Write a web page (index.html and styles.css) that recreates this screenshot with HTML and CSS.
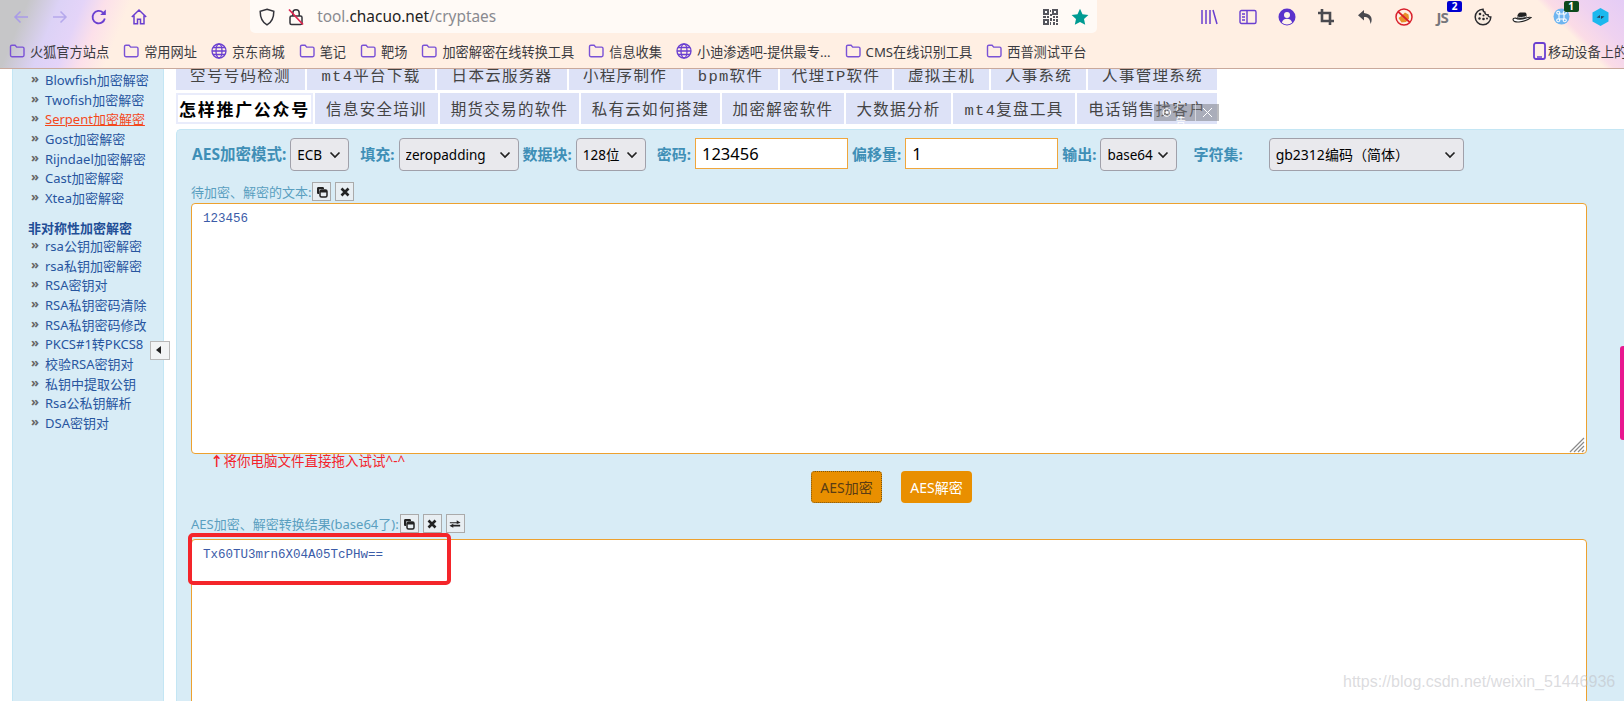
FILE: index.html
```html
<!DOCTYPE html>
<html lang="en">
<head>
    <meta charset="UTF-8">
    <title>AES加密解密</title>
    <link rel="stylesheet" href="styles.css">
</head>
<body>
    <!-- Icon sprites -->
    <svg class="sprites" width="0" height="0">
        <symbol id="i-folder" viewBox="0 0 16 16"><path d="M1.5 3.6c0-.8.6-1.4 1.4-1.4h3.2l1.6 1.9h5.9c.8 0 1.4.6 1.4 1.4v6.8c0 .8-.6 1.4-1.4 1.4H2.9c-.8 0-1.4-.6-1.4-1.4z" fill="none" stroke="#7a52d6" stroke-width="1.4"/></symbol>
        <symbol id="i-globe" viewBox="0 0 16 16"><g fill="none" stroke="#6a3fd0" stroke-width="1.3"><circle cx="8" cy="8" r="7"/><ellipse cx="8" cy="8" rx="3" ry="7"/><path d="M1 8h14M2 4.5h12M2 11.5h12"/></g></symbol>
        <symbol id="i-copy" viewBox="0 0 12 12"><path d="M1 2.5C1 1.5 1.600 1 2.500 1h4C7.500 1 8 1.500 8 2.500V3H4.500C3.500 3 3 3.600 3 4.500V8h-.5C1.500 8 1 7.500 1 6.500z" fill="#222"/><rect x="4" y="4" width="7" height="7" rx="1.500" fill="none" stroke="#222" stroke-width="1.500"/><rect x="4" y="4" width="7" height="2.500" fill="#222"/></symbol>
        <symbol id="i-close" viewBox="0 0 12 12"><path d="M2.500 2.500l7 7M9.500 2.500l-7 7" stroke="#222" stroke-width="2.600" fill="none"/></symbol>
        <symbol id="i-swap" viewBox="0 0 14 12"><path d="M1 4h8V1.500L13.500 4.500 9 6V5H1zM13 7H5V5.800L.5 8 5 10.500V9h8z" fill="#222"/></symbol>
    </svg>

    <!-- Browser chrome -->
    <div class="browser">
        <div class="toolbar">
            <div class="nav-btn">
                <svg width="18" height="18" viewBox="0 0 18 18"><path d="M16 9H3M8.500 3.500L3 9l5.500 5.500" fill="none" stroke="#a99be8" stroke-width="1.500"/></svg>
            </div>
            <div class="nav-btn">
                <svg width="18" height="18" viewBox="0 0 18 18"><path d="M2 9h13M9.500 3.500L15 9l-5.500 5.500" fill="none" stroke="#b5a8ec" stroke-width="1.500"/></svg>
            </div>
            <div class="nav-btn">
                <svg width="18" height="18" viewBox="0 0 18 18"><path d="M14.800 10.500A6.200 6.200 0 1 1 13 4.600" fill="none" stroke="#6a3fd0" stroke-width="1.800"/><path d="M15.800 1.500v5.600h-5.600z" fill="#6a3fd0"/></svg>
            </div>
            <div class="nav-btn">
                <svg width="18" height="18" viewBox="0 0 18 18"><path d="M1.800 9L9 2l7.200 7M4 7.500v8.300h3.500v-4.500h3v4.500H14V7.500" fill="none" stroke="#6a3fd0" stroke-width="1.500"/></svg>
            </div>
            <div class="urlbar">
                <svg class="url-shield" width="16" height="18" viewBox="0 0 16 18"><path d="M8 1.200L14.800 3.400c0 6-1.500 10.500-6.800 13.400C2.700 13.900 1.200 9.400 1.200 3.400z" fill="none" stroke="#33333a" stroke-width="1.500"/></svg>
                <svg class="url-lock" width="16" height="18" viewBox="0 0 16 18"><rect x="2" y="8" width="12" height="8.500" rx="1.500" fill="none" stroke="#33333a" stroke-width="1.500"/><path d="M4.800 8V5a3.200 3.200 0 0 1 6.400 0v3" fill="none" stroke="#33333a" stroke-width="1.500"/><path d="M1 1.500l14 15" stroke="#e0234f" stroke-width="1.700"/></svg>
                <span class="url-text">tool.<b>chacuo.net</b>/cryptaes</span>
                <svg class="url-qr" width="15" height="16" viewBox="0 0 15 16"><g fill="#55555c"><path d="M0 0h6v6H0zM9 0h6v6H9zM0 10h6v6H0z"/><path d="M7 1h1v2H7zM7 5h2v2H7zM10 7h2v2h-2zM13 7h2v2h-2zM0 7h3v2H0zM4 7h2v2H4zM7 9h2v3H7zM10 10h2v2h-2zM13 10h2v3h-2zM7 13h1v3H7zM10 13h2v3h-2zM13 14h2v2h-2z"/></g><path d="M2 2h2v2H2zM11 2h2v2h-2zM2 12h2v2H2z" fill="#fff"/></svg>
                <svg class="url-star" width="18" height="18" viewBox="0 0 18 18"><path d="M9 .8l2.500 5.400 5.900.7-4.400 4 1.200 5.900L9 13.900l-5.200 2.900L5 10.900.6 6.900l5.900-.7z" fill="#009b92"/></svg>
            </div>
            <div class="tool-icons">
                <div class="tool-icon"><svg width="18" height="16" viewBox="0 0 18 16"><path d="M2 1v14M6 1v14M10 1v14M13 1l4 14" fill="none" stroke="#6a3fd0" stroke-width="1.500"/></svg></div>
                <div class="tool-icon"><svg width="18" height="16" viewBox="0 0 18 16"><rect x="1" y="1.500" width="16" height="13" rx="1.500" fill="none" stroke="#6a3fd0" stroke-width="1.400"/><path d="M8 1.500v13M3 5h3M3 8h3M3 11h3" fill="none" stroke="#6a3fd0" stroke-width="1.400"/></svg></div>
                <div class="tool-icon"><svg width="18" height="18" viewBox="0 0 18 18"><circle cx="9" cy="9" r="8.500" fill="#5a32cc"/><circle cx="9" cy="7" r="3" fill="#fff4ea"/><path d="M3.800 14.500c1-3 3-3.800 5.200-3.800s4.200.8 5.200 3.800A8 8 0 0 1 9 16.500a8 8 0 0 1-5.200-2z" fill="#fff4ea"/></svg></div>
                <div class="tool-icon"><svg width="16" height="16" viewBox="0 0 16 16"><path d="M4 0v12h12M0 4h12v12" fill="none" stroke="#4a4a50" stroke-width="2.600"/></svg></div>
                <div class="tool-icon"><svg width="17" height="16" viewBox="0 0 17 16"><path d="M7 1L1 6.200 7 11.500V8c4 0 6.200 1.600 6.500 7 1.800-3 2.800-9.800-6.500-11z" fill="#4a4a50"/></svg></div>
                <div class="tool-icon"><svg width="18" height="18" viewBox="0 0 18 18"><circle cx="9" cy="9" r="8" fill="none" stroke="#d9202c" stroke-width="1.500"/><path d="M3.500 10l4.500-3.500 2-2 3.500 2 .5 4-3 3.500-4.500.5z" fill="#e8902a"/><path d="M3 3.500l12 11" stroke="#d9202c" stroke-width="1.700"/></svg></div>
                <div class="tool-icon"><span class="js-mark">JS</span><span class="badge badge-blue">2</span></div>
                <div class="tool-icon"><svg width="18" height="18" viewBox="0 0 18 18"><path d="M9 1.200a7.800 7.800 0 1 0 7.800 7.800c-1.700.2-2.800-.8-2.800-2.200-1.800.2-3.200-.9-3.100-2.600C9.700 4 9 2.800 9 1.200z" fill="#f8ece0" stroke="#2a2a2e" stroke-width="1.500"/><g fill="#2a2a2e"><circle cx="6" cy="6" r="1.300"/><circle cx="9.500" cy="7.500" r="1"/><circle cx="5.500" cy="10.500" r="1.200"/><circle cx="9.500" cy="11" r="1.300"/><circle cx="13" cy="10.500" r="1"/></g></svg></div>
                <div class="tool-icon"><svg width="20" height="12" viewBox="0 0 20 12"><path d="M1 8.500c0 2 3 2.800 6 2.500 4-.4 9-2 12-4.500-2-.5-3.300 0-4 .3C10 8.500 6 8.800 3.500 7 2 7 1 7.500 1 8.500z" fill="#fff" stroke="#222" stroke-width="1.100"/><path d="M5 7.200C5.300 3.500 6.500 1 9.500 1.500c1.500.2 3.500-.6 4.500.5.600 1 .8 2.500.8 4.300C11 8 8 8.500 5 7.200z" fill="#222"/><path d="M5 5.800c3 1.200 6.500.8 9.800-.8" stroke="#f4f4f4" stroke-width=".8" fill="none"/></svg></div>
                <div class="tool-icon"><svg width="17" height="17" viewBox="0 0 17 17"><circle cx="8.500" cy="8.500" r="8" fill="#6fb5f0"/><path d="M6 6h5v5H6zM6 6a1.500 1.500 0 1 0-1.500 0H6zM11 6a1.500 1.500 0 1 1 1.500 0H11zM6 11a1.500 1.500 0 1 1-1.500 0H6zM11 11a1.500 1.500 0 1 0 1.500 0H11z" fill="none" stroke="#fff" stroke-width="1.100"/></svg><span class="badge badge-green">1</span></div>
                <div class="tool-icon"><svg width="17" height="18" viewBox="0 0 17 18"><path d="M8.500 0l8 4.500v9l-8 4.500-8-4.500v-9z" fill="#1cb8ee"/><path d="M4.500 9.500l3.500-2.500v3zM12.500 8.500L9 11V8z" fill="#2a4560"/></svg></div>
            </div>
        </div>

        <div class="bookmarks">
            <div class="bookmark"><svg><use href="#i-folder"/></svg>火狐官方站点</div>
            <div class="bookmark"><svg><use href="#i-folder"/></svg>常用网址</div>
            <div class="bookmark"><svg><use href="#i-globe"/></svg>京东商城</div>
            <div class="bookmark"><svg><use href="#i-folder"/></svg>笔记</div>
            <div class="bookmark"><svg><use href="#i-folder"/></svg>靶场</div>
            <div class="bookmark"><svg><use href="#i-folder"/></svg>加密解密在线转换工具</div>
            <div class="bookmark"><svg><use href="#i-folder"/></svg>信息收集</div>
            <div class="bookmark"><svg><use href="#i-globe"/></svg>小迪渗透吧-提供最专...</div>
            <div class="bookmark"><svg><use href="#i-folder"/></svg>CMS在线识别工具</div>
            <div class="bookmark"><svg><use href="#i-folder"/></svg>西普测试平台</div>
            <div class="bookmark bookmark-mobile">
                <svg width="13" height="18" viewBox="0 0 13 18"><rect x="1" y="1" width="11" height="16" rx="2" fill="none" stroke="#6a3fd0" stroke-width="1.800"/><path d="M4 15h5" stroke="#6a3fd0" stroke-width="1.500"/></svg>移动设备上的
            </div>
        </div>
    </div>

    <!-- Page -->
    <div class="page">
        <!-- Sidebar -->
        <div class="sidebar">
            <ul class="side-list">
                <li><a href="#">Blowfish加密解密</a></li>
                <li><a href="#">Twofish加密解密</a></li>
                <li><a href="#" class="current">Serpent加密解密</a></li>
                <li><a href="#">Gost加密解密</a></li>
                <li><a href="#">Rijndael加密解密</a></li>
                <li><a href="#">Cast加密解密</a></li>
                <li><a href="#">Xtea加密解密</a></li>
            </ul>
            <h3>非对称性加密解密</h3>
            <ul class="side-list">
                <li><a href="#">rsa公钥加密解密</a></li>
                <li><a href="#">rsa私钥加密解密</a></li>
                <li><a href="#">RSA密钥对</a></li>
                <li><a href="#">RSA私钥密码清除</a></li>
                <li><a href="#">RSA私钥密码修改</a></li>
                <li><a href="#">PKCS#1转PKCS8</a></li>
                <li><a href="#">校验RSA密钥对</a></li>
                <li><a href="#">私钥中提取公钥</a></li>
                <li><a href="#">Rsa公私钥解析</a></li>
                <li><a href="#">DSA密钥对</a></li>
            </ul>
            <div class="side-toggle"></div>
        </div>

        <!-- Main Content -->
        <div class="main">
            <div class="ads">
                <div class="ad-row">
                    <a class="ad w131">空号号码检测</a>
                    <a class="ad w130">mt4平台下载</a>
                    <a class="ad w132">日本云服务器</a>
                    <a class="ad w114">小程序制作</a>
                    <a class="ad w97">bpm软件</a>
                    <a class="ad w114">代理IP软件</a>
                    <a class="ad w97">虚拟主机</a>
                    <a class="ad w97">人事系统</a>
                    <a class="ad w131">人事管理系统</a>
                </div>
                <div class="ad-row">
                    <a class="ad ad-hot w139">怎样推广公众号</a>
                    <a class="ad w125">信息安全培训</a>
                    <a class="ad w141">期货交易的软件</a>
                    <a class="ad w141">私有云如何搭建</a>
                    <a class="ad w124">加密解密软件</a>
                    <a class="ad w107">大数据分析</a>
                    <a class="ad w124">mt4复盘工具</a>
                    <a class="ad w140">电话销售找客户</a>
                </div>
                <div class="ad-tag">
                    <svg width="13" height="13" viewBox="0 0 13 13"><circle cx="6.500" cy="6.500" r="5" fill="none" stroke="#fff" stroke-width="1.500"/><circle cx="6.500" cy="6.500" r="2" fill="#fff"/></svg>
                    <span class="ad-tag-text">广告</span>
                    <span class="ad-tag-close">
                        <svg width="11" height="11" viewBox="0 0 11 11"><path d="M1 1l9 9M10 1l-9 9" stroke="#fff" stroke-width="1"/></svg>
                    </span>
                </div>
            </div>

            <div class="panel">
                <div class="options">
                    <label class="opt-label first">AES加密模式:</label>
                    <select class="w-mode"><option>ECB</option></select>
                    <label class="opt-label ml-8">填充:</label>
                    <select class="w-pad"><option>zeropadding</option></select>
                    <label class="opt-label">数据块:</label>
                    <select class="w-block"><option>128位</option></select>
                    <label class="opt-label ml-8">密码:</label>
                    <input class="key-input" type="text" value="123456">
                    <label class="opt-label">偏移量:</label>
                    <input class="key-input" type="text" value="1">
                    <label class="opt-label">输出:</label>
                    <select class="w-out"><option>base64</option></select>
                    <label class="opt-label ml-12 charset-label">字符集:</label>
                    <select class="w-charset"><option>gb2312编码（简体）</option></select>
                </div>

                <div class="box-title">
                    <span>待加密、解密的文本:</span>
                    <button class="mini-btn"><svg><use href="#i-copy"/></svg></button>
                    <button class="mini-btn"><svg><use href="#i-close"/></svg></button>
                </div>
                <div class="source-wrap">
                    <textarea class="text-box source" spellcheck="false">123456</textarea>
                    <svg class="grip" width="16" height="16" viewBox="0 0 16 16"><path d="M1 15L15 1M5 15L15 5M9 15l6-6M13 15l2-2" stroke="#8a8a8a" stroke-width="1.200" fill="none"/></svg>
                </div>
                <div class="drop-hint"><b>↑</b>将你电脑文件直接拖入试试^-^</div>

                <div class="actions">
                    <button class="btn btn-focus">AES加密</button>
                    <button class="btn">AES解密</button>
                </div>

                <div class="box-title result-title">
                    <span>AES加密、解密转换结果(base64了):</span>
                    <button class="mini-btn"><svg><use href="#i-copy"/></svg></button>
                    <button class="mini-btn"><svg><use href="#i-close"/></svg></button>
                    <button class="mini-btn"><svg><use href="#i-swap"/></svg></button>
                </div>
                <textarea class="text-box result" spellcheck="false">Tx60TU3mrn6X04A05TcPHw==</textarea>

                <!-- red annotation around the result -->
                <div class="mark-box"></div>
            </div>
        </div>

        <div class="side-tab"></div>
        <div class="watermark">https://blog.csdn.net/weixin_51446936</div>
    </div>
</body>
</html>
```

FILE: styles.css
```css
/* General Reset */
* {
    margin: 0;
    padding: 0;
    box-sizing: border-box;
}

html, body {
    height: 701px;
    overflow: hidden;
}

body {
    font-family: "Noto Sans", "Noto Sans CJK SC", sans-serif;
    background-color: #fff;
    display: flex;
    flex-direction: column;
}

.sprites {
    position: absolute;
}

/* Browser chrome */
.browser {
    height: 69px;
    flex: none;
    position: relative;
    z-index: 5;
    border-bottom: 1px solid #c9a99c;
    background:
        linear-gradient(45deg, rgba(251, 220, 230, 0) calc(100% - 62px), #fbdce6 calc(100% - 55px), #efd2f0 calc(100% - 33px), #e4ccf6 100%),
        linear-gradient(112deg, #c6c6c8 0, #c6c6c8 26px, #dcd2f6 56px, #e4d4f8 78px, #fce0ea 98px, #ffefe3 122px);
    background-color: #ffefe3;
}

.toolbar {
    height: 34px;
    display: flex;
    align-items: flex-start;
    padding-left: 1px;
}

.nav-btn {
    width: 39.300px;
    height: 33px;
    display: flex;
    align-items: center;
    justify-content: center;
}

.urlbar {
    width: 847px;
    height: 33px;
    margin-left: 92px;
    background-color: #fffaf6;
    border-radius: 0 0 5px 5px;
    display: flex;
    align-items: center;
    padding-left: 9px;
}

.url-lock {
    margin-left: 13px;
}

.url-text {
    margin-left: 13px;
    font-size: 15.400px;
    color: #8a8a90;
}

.url-text b {
    font-weight: 400;
    color: #222;
}

.url-qr {
    margin-left: auto;
}

.url-star {
    margin-left: 13px;
    margin-right: 8px;
}

.tool-icons {
    margin-left: auto;
    padding-right: 4px;
    display: flex;
}

.tool-icon {
    width: 39.200px;
    height: 33px;
    display: flex;
    align-items: center;
    justify-content: center;
    position: relative;
}

.js-mark {
    font-size: 15px;
    font-weight: 700;
    color: #77777c;
    letter-spacing: -1px;
    margin-left: -3px;
}

.badge {
    position: absolute;
    top: 1px;
    left: 23px;
    width: 15px;
    height: 11px;
    border-radius: 2px;
    font-size: 10px;
    line-height: 11px;
    font-weight: 700;
    text-align: center;
    color: #fff;
}

.badge-blue {
    background-color: #0000d0;
}

.badge-green {
    background-color: #0c4a1c;
    left: 22px;
}

.bookmarks {
    height: 34px;
    display: flex;
    align-items: center;
    gap: 14px;
    padding-left: 9px;
    font-size: 13.200px;
    color: #3a3a40;
    white-space: nowrap;
}

.bookmark {
    display: flex;
    align-items: center;
    gap: 5px;
}

.bookmark svg {
    width: 16px;
    height: 16px;
    flex: none;
}

.bookmark-mobile {
    margin-left: auto;
    width: 91px;
    flex: none;
    gap: 2px;
}

.bookmark-mobile svg {
    width: 13px;
    height: 18px;
}

/* Page */
.page {
    flex: 1;
    display: flex;
    min-height: 0;
    overflow: hidden;
    position: relative;
}

/* Sidebar */
.sidebar {
    width: 152px;
    margin-left: 12px;
    flex: none;
    background-color: #d8ecf6;
    border-left: 1px solid #c4e6f4;
    border-right: 1px solid #c4e6f4;
    padding-top: 2px;
    position: relative;
    font-size: 13px;
}

.side-list {
    list-style: none;
}

.side-list li {
    height: 19.700px;
    line-height: 19.700px;
    padding-left: 18px;
    white-space: nowrap;
}

.side-list li::before {
    content: "»";
    display: inline-block;
    width: 14px;
    font-weight: 700;
    color: #666;
    line-height: 14px;
    vertical-align: 2px;
}

.side-list a {
    color: #27559f;
    text-decoration: none;
}

.side-list a.current {
    color: #f4481c;
    text-decoration: underline;
}

.sidebar h3 {
    font-size: 13px;
    font-weight: 700;
    color: #1f4e96;
    padding-left: 15px;
    margin-top: 10px;
    margin-bottom: -1px;
    line-height: 19px;
}

.side-toggle {
    position: absolute;
    top: 272px;
    left: 137px;
    width: 20px;
    height: 19px;
    background-color: #f2f4f5;
    border: 1px solid #b8b8b8;
}

.side-toggle::after {
    content: "";
    position: absolute;
    left: 5px;
    top: 4px;
    border-style: solid;
    border-width: 4.500px 5px 4.500px 0;
    border-color: transparent #222 transparent transparent;
}

/* Main Content */
.main {
    flex: 1;
    min-width: 0;
    margin-left: 12px;
}

.ads {
    margin-top: -10px;
    position: relative;
}

.ad-row {
    display: flex;
    gap: 2px;
    height: 31px;
    margin-bottom: 3px;
}

.ad {
    display: flex;
    align-items: center;
    justify-content: center;
    height: 31px;
    background-color: #dde2f7;
    color: #444;
    font-family: "Liberation Mono", "Noto Sans CJK SC", monospace;
    font-size: 15.500px;
    letter-spacing: 1.300px;
    white-space: nowrap;
}

.ad-hot {
    background-color: #fff;
    border: 2px solid #e9ecfb;
    color: #000;
    font-weight: 700;
    font-size: 17px;
    letter-spacing: 1.700px;
}

.w97 { width: 95px; }
.w107 { width: 105px; }
.w114 { width: 112px; }
.w124 { width: 122px; }
.w125 { width: 123px; }
.w130 { width: 128px; }
.w131 { width: 129px; }
.w132 { width: 130px; }
.w139 { width: 137px; }
.w140 { width: 140px; }
.w141 { width: 139px; }

.ad-tag {
    position: absolute;
    left: 978px;
    bottom: 3px;
    width: 65px;
    height: 17px;
    background-color: rgba(120, 120, 125, 0.5);
    display: flex;
    align-items: center;
    padding-left: 8px;
}

.ad-tag-text {
    margin-left: 4px;
    font-size: 10px;
    color: #fff;
    width: 26px;
}

.ad-tag-close {
    height: 17px;
    padding: 0 6px;
    border-left: 1px solid rgba(255, 255, 255, 0.5);
    display: flex;
    align-items: center;
}

/* Panel */
.panel {
    position: relative;
    margin-top: 5px;
    height: 600px;
    background-color: #d8ecf6;
    border-left: 1px solid #c4e6f4;
    border-top: 1px solid #c4e6f4;
    border-radius: 5px 0 0 0;
    padding: 8px 0 0 14px;
}

.options {
    display: flex;
    align-items: flex-start;
    gap: 4px;
    height: 34px;
    padding-left: 1px;
}

.opt-label {
    font-size: 15px;
    font-weight: 700;
    color: #3f8fb6;
    line-height: 32px;
    white-space: nowrap;
}

.first {
    font-size: 15.500px;
}

.ml-8 {
    margin-left: 7px;
}

.ml-12 {
    margin-left: 12px;
}

.charset-label {
    margin-right: 22px;
}

select {
    height: 33px;
    font-family: "Noto Sans", "Noto Sans CJK SC", sans-serif;
    font-size: 13.500px;
    color: #000;
    padding-left: 6px;
    appearance: none;
    background-color: #e9e9ed;
    background-image: url("data:image/svg+xml,%3Csvg xmlns='http://www.w3.org/2000/svg' width='12' height='8'%3E%3Cpath d='M1.500 1.500L6 6l4.500-4.500' fill='none' stroke='%23222' stroke-width='1.700'/%3E%3C/svg%3E");
    background-repeat: no-repeat;
    background-position: right 7px center;
    border: 1px solid #a0a0aa;
    border-radius: 4px;
}

.w-mode { width: 59px; }
.w-pad { width: 120px; }
.w-block { width: 70px; }
.w-out { width: 77px; }
.w-charset { width: 195px; font-size: 14px; }

.key-input {
    width: 153px;
    height: 31px;
    border: 1px solid #f0a63c;
    padding-left: 6px;
    font-family: "Noto Sans", sans-serif;
    font-size: 16.500px;
    color: #000;
    background-color: #fff;
    outline: none;
}

.box-title {
    display: flex;
    align-items: center;
    height: 19px;
    margin-top: 10px;
    font-size: 13px;
    color: #5a9fc0;
}

.mini-btn {
    width: 19px;
    height: 19px;
    margin-left: 4px;
    background-color: #e8eef2;
    border: 1px solid #aaa;
    display: flex;
    align-items: center;
    justify-content: center;
}

.box-title span + .mini-btn {
    margin-left: 1px;
}

.mini-btn svg {
    width: 12px;
    height: 12px;
}

.source-wrap {
    position: relative;
    width: 1396px;
    margin-top: 2px;
}

.text-box {
    display: block;
    width: 1396px;
    border: 1px solid #eda12f;
    border-radius: 4px;
    padding: 6px 11px;
    background-color: #fff;
    font-family: "Liberation Mono", monospace;
    font-size: 12.500px;
    line-height: 18px;
    color: #3b5ca8;
    outline: none;
    resize: none;
}

.source {
    height: 251px;
}

.grip {
    position: absolute;
    right: 2px;
    bottom: 1px;
}

.result {
    height: 300px;
    margin-top: 6px;
}

.drop-hint {
    padding-left: 19px;
    font-size: 13.500px;
    line-height: 15px;
    color: #f4232b;
}

.actions {
    display: flex;
    justify-content: center;
    gap: 19px;
    margin-top: 2px;
    width: 1396px;
    padding-left: 5px;
}

.btn {
    width: 71px;
    height: 32px;
    background-color: #e98f00;
    border: none;
    border-radius: 4px;
    color: #fff;
    font-family: "Noto Sans", "Noto Sans CJK SC", sans-serif;
    font-size: 14px;
}

.btn-focus {
    color: #5a3c14;
    outline: 1px dotted #7a5510;
    outline-offset: -1px;
}

.result-title {
    margin-top: 11px;
}

.mark-box {
    position: absolute;
    left: 11px;
    top: 403px;
    width: 263px;
    height: 52px;
    border: 4px solid #f4252a;
    border-radius: 5px;
}

/* Overlays */
.side-tab {
    position: absolute;
    right: 0;
    top: 277px;
    width: 4px;
    height: 94px;
    background-color: #e8178f;
    border-radius: 3px 0 0 3px;
}

.watermark {
    position: absolute;
    left: 1343px;
    top: 604px;
    font-family: "Liberation Sans", sans-serif;
    font-size: 16px;
    color: rgba(190, 190, 195, 0.55);
    white-space: nowrap;
}
```
